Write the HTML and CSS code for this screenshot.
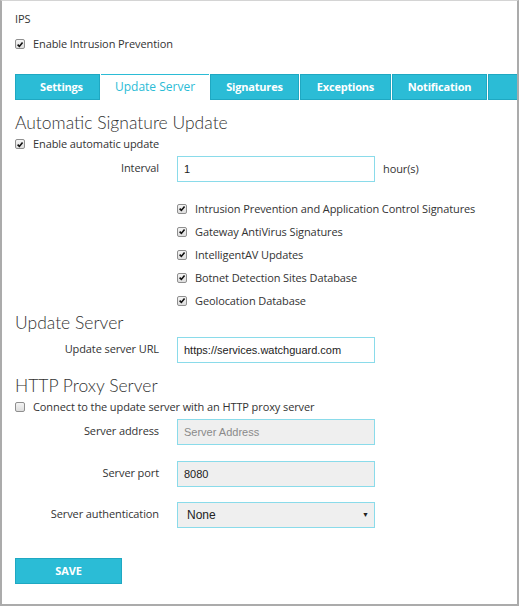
FILE: index.html
```html
<!DOCTYPE html>
<html>
<head>
<meta charset="utf-8">
<link rel="stylesheet" href="styles.css">
</head>
<body>
<div class="frame">
  <div class="page-title">IPS</div>
  <div class="check-row row-enable"><span class="cb checked"><svg viewBox="0 0 10 10"><path d="M2 5.2 L4.2 7.4 L8.2 2.4" /></svg></span>Enable Intrusion Prevention</div>

  <div class="tabs">
    <div class="tab t-settings">Settings</div>
    <div class="tab active t-update">Update Server</div>
    <div class="tab t-sig">Signatures</div>
    <div class="tab t-exc">Exceptions</div>
    <div class="tab t-not">Notification</div>
    <div class="tab t-fill"></div>
  </div>

  <h2 class="section h-auto">Automatic Signature Update</h2>
  <div class="check-row row-auto"><span class="cb checked"><svg viewBox="0 0 10 10"><path d="M2 5.2 L4.2 7.4 L8.2 2.4" /></svg></span>Enable automatic update</div>

  <div class="field f-interval">
    <span class="label">Interval</span>
    <div class="input">1</div>
    <span class="suffix">hour(s)</span>
  </div>

  <div class="checklist">
    <div class="check-item"><span class="cb checked"><svg viewBox="0 0 10 10"><path d="M2 5.2 L4.2 7.4 L8.2 2.4" /></svg></span>Intrusion Prevention and Application Control Signatures</div>
    <div class="check-item"><span class="cb checked"><svg viewBox="0 0 10 10"><path d="M2 5.2 L4.2 7.4 L8.2 2.4" /></svg></span>Gateway AntiVirus Signatures</div>
    <div class="check-item"><span class="cb checked"><svg viewBox="0 0 10 10"><path d="M2 5.2 L4.2 7.4 L8.2 2.4" /></svg></span>IntelligentAV Updates</div>
    <div class="check-item"><span class="cb checked"><svg viewBox="0 0 10 10"><path d="M2 5.2 L4.2 7.4 L8.2 2.4" /></svg></span>Botnet Detection Sites Database</div>
    <div class="check-item"><span class="cb checked"><svg viewBox="0 0 10 10"><path d="M2 5.2 L4.2 7.4 L8.2 2.4" /></svg></span>Geolocation Database</div>
  </div>

  <h2 class="section h-server">Update Server</h2>
  <div class="field f-url">
    <span class="label">Update server URL</span>
    <div class="input">https://services.watchguard.com</div>
  </div>

  <h2 class="section h-proxy">HTTP Proxy Server</h2>
  <div class="check-row row-proxy"><span class="cb"></span>Connect to the update server with an HTTP proxy server</div>

  <div class="field f-addr">
    <span class="label">Server address</span>
    <div class="input disabled placeholder">Server Address</div>
  </div>
  <div class="field f-port">
    <span class="label">Server port</span>
    <div class="input disabled">8080</div>
  </div>
  <div class="field f-auth">
    <span class="label">Server authentication</span>
    <div class="input disabled select"><span class="sel-val">None</span><span class="arrow">&#9660;</span></div>
  </div>

  <div class="btn-save">SAVE</div>
</div>
</body>
</html>
```

FILE: styles.css
```css
html, body {
  margin: 0;
  padding: 0;
  background: #ffffff;
}

.frame {
  box-sizing: border-box;
  width: 519px;
  height: 606px;
  border-top: 1px solid #d4d4d4;
  border-left: 2px solid #ababab;
  border-right: 2px solid #ababab;
  border-bottom: 2px solid #ababab;
  padding: 10px 0 0 13px;
  font-family: "Open Sans", "Liberation Sans", sans-serif;
  font-size: 11px;
  letter-spacing: -0.1px;
  color: #333333;
  overflow: hidden;
}

.page-title {
  line-height: 16px;
  height: 16px;
}

.check-row {
  display: flex;
  align-items: center;
  height: 16px;
  line-height: 16px;
}

.row-enable { margin-top: 9px; }
.row-auto { margin-top: 2px; }
.row-proxy { margin-top: 2px; }

.cb {
  box-sizing: border-box;
  width: 10px;
  height: 10px;
  border: 1px solid #8f8f8f;
  border-radius: 2px;
  background: linear-gradient(#f4f4f4, #dedede);
  margin-right: 8px;
  flex: none;
  display: flex;
  align-items: center;
  justify-content: center;
}

.cb svg {
  width: 9px;
  height: 9px;
}

.cb path {
  fill: none;
  stroke: #111111;
  stroke-width: 2;
}

/* Tabs */
.tabs {
  display: flex;
  margin-top: 22px;
  height: 26px;
  gap: 1px;
  margin-right: -2px;
}

.tab {
  box-sizing: border-box;
  height: 26px;
  line-height: 24px;
  background: #2bbcd6;
  border: 1px solid #1fa8c2;
  color: #ffffff;
  font-weight: bold;
  font-size: 11px;
  letter-spacing: -0.2px;
  text-align: center;
}

.t-settings { width: 85px; padding-left: 8px; }
.t-update { width: 108px; }
.t-sig { width: 89px; }
.t-exc { width: 91px; }
.t-not { width: 95px; }
.t-fill { flex: 1; }

.tab.active {
  background: #ffffff;
  color: #2bbcd6;
  font-weight: normal;
  font-size: 12px;
  letter-spacing: 0;
  border: none;
  border-top: 1px solid #2bbcd6;
}

/* Section headings */
.section {
  margin: 0;
  font-family: "Lato", "Open Sans", sans-serif;
  font-weight: 300;
  font-size: 17.5px;
  letter-spacing: 0;
  line-height: 22px;
  height: 22px;
  color: #333333;
}

.h-auto { margin-top: 12px; }
.h-server { margin-top: 0; }
.h-proxy { margin-top: 12px; }

/* Fields */
.field {
  display: flex;
  align-items: center;
  height: 26px;
}

.f-interval { margin-top: 4px; }
.f-url { margin-top: 3px; }
.f-addr { margin-top: 4px; }
.f-port { margin-top: 16px; }
.f-auth { margin-top: 15px; }

.label {
  width: 144px;
  text-align: right;
  margin-right: 18px;
  flex: none;
  position: relative;
  top: -2px;
}

.input {
  box-sizing: border-box;
  width: 198px;
  height: 26px;
  border: 1px solid #8adbea;
  padding: 0 6px;
  font-family: "Liberation Sans", Arial, sans-serif;
  font-size: 11px;
  letter-spacing: 0;
  line-height: 24px;
  color: #222222;
  background: #ffffff;
}

.input.disabled {
  background: #efefef;
}

.input.placeholder {
  color: #8a8a8a;
}

.select {
  display: flex;
  justify-content: space-between;
  align-items: center;
  padding-left: 9px;
  padding-right: 5px;
  font-size: 12px;
}

.arrow {
  font-size: 7px;
  color: #222;
}

.suffix {
  margin-left: 8px;
  position: relative;
  top: -1px;
}

/* Checklist */
.checklist {
  margin-top: 15px;
  padding-left: 162px;
}

.check-item {
  display: flex;
  align-items: center;
  height: 23px;
  line-height: 23px;
}

.btn-save {
  margin-top: 30px;
  box-sizing: border-box;
  width: 107px;
  height: 26px;
  line-height: 24px;
  background: #2bbcd6;
  border: 1px solid #1fa8c2;
  color: #ffffff;
  font-weight: bold;
  font-size: 11px;
  text-align: center;
}
```
